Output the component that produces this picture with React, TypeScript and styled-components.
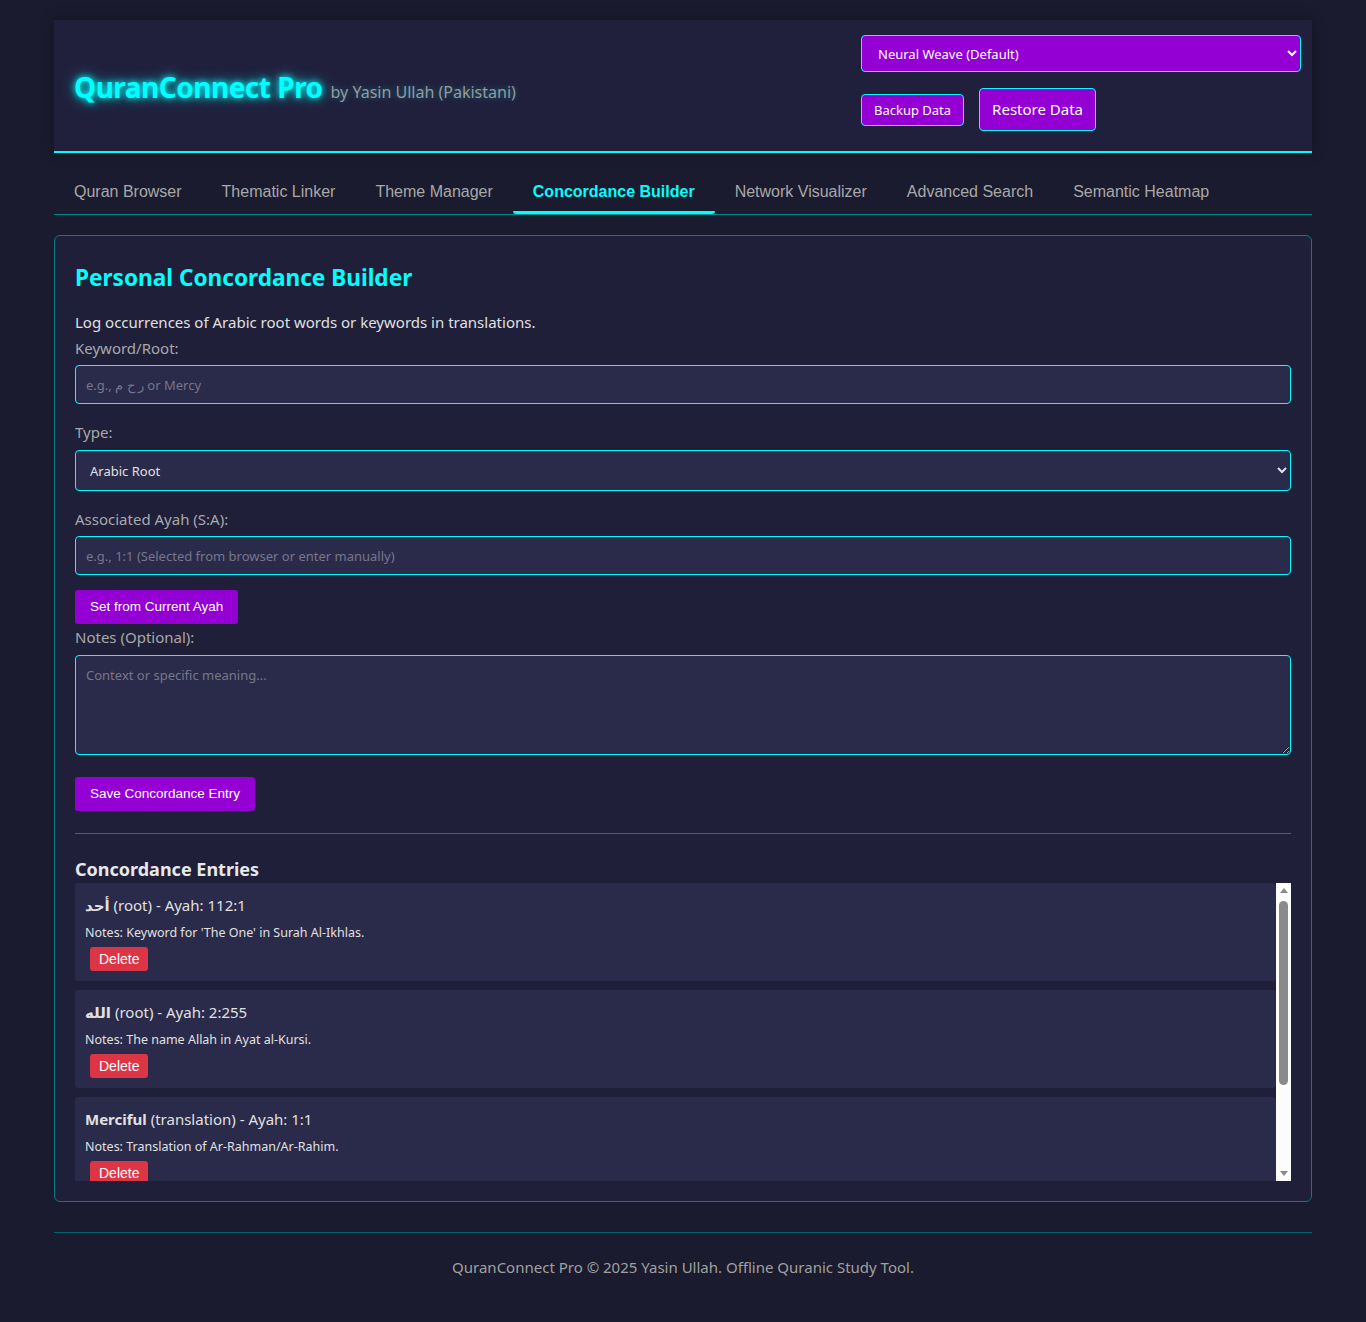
import React from "react";
import styled, { createGlobalStyle } from "styled-components";

const Global = createGlobalStyle`
  html, body { margin: 0; padding: 0; background: #1a1b2e; }
  body { font-family: "Noto Sans", "DejaVu Sans", sans-serif; color: #e0e0e0; }
  * { box-sizing: border-box; }
`;

const Page = styled.div`
  width: 1258px;
  margin: 0 auto;
  padding: 20px 0 0;
`;

const Header = styled.header`
  display: flex;
  justify-content: space-between;
  align-items: center;
  background: #20203c;
  padding: 15px 11px 20px 20px;
  border-bottom: 2px solid #00ffff;
  box-shadow: 0 0 12px rgba(0, 0, 0, 0.35);
`;

const Brand = styled.div`
  display: flex;
  align-items: baseline;
  gap: 8px;
  padding-top: 8px;
`;

const Title = styled.h1`
  margin: 0;
  font-size: 28px;
  font-weight: 700;
  color: #00ffff;
  letter-spacing: -0.5px;
  text-shadow: 0 0 6px #00ffff, 0 0 14px rgba(0, 255, 255, 0.7);
`;

const Sub = styled.span`
  font-size: 16px;
  color: #999;
  text-shadow: 0 0 6px rgba(0, 255, 255, 0.35);
`;

const Controls = styled.div`
  width: 440px;
  display: flex;
  flex-direction: column;
  gap: 16px;
`;

const ThemeSelect = styled.select`
  width: 100%;
  height: 37px;
  background: #9400d3;
  color: #fff;
  border: 1px solid #00ffff;
  border-radius: 4px;
  padding: 0 12px;
  font-family: "Noto Sans", sans-serif;
  font-size: 13px;
`;

const ButtonRow = styled.div`
  display: flex;
  align-items: center;
  gap: 15px;
`;

const HeadButton = styled.button<{ $big?: boolean }>`
  background: #9400d3;
  color: #fff;
  border: 1px solid #00ffff;
  border-radius: 4px;
  font-family: "Noto Sans", sans-serif;
  font-size: ${(p) => (p.$big ? "15px" : "13px")};
  padding: ${(p) => (p.$big ? "10px 12px" : "7px 12px")};
  line-height: ${(p) => (p.$big ? "21px" : "16px")};
  cursor: pointer;
`;

const Tabs = styled.nav`
  display: flex;
  margin-top: 18px;
  border-bottom: 1px solid #008b8b;
`;

const Tab = styled.button<{ $active?: boolean }>`
  background: none;
  border: none;
  border-bottom: 3px solid ${(p) => (p.$active ? "#00ffff" : "transparent")};
  border-radius: 0 0 3px 3px;
  padding: 12px 20px 10px;
  line-height: 18px;
  font-family: "Liberation Sans", Arial, sans-serif;
  font-size: 16px;
  font-weight: ${(p) => (p.$active ? 700 : 400)};
  color: ${(p) => (p.$active ? "#00ffff" : "#a8a8a8")};
  cursor: pointer;
`;

const Panel = styled.section`
  margin-top: 20px;
  background: #1f1f3a;
  border: 1px solid #008080;
  border-radius: 6px;
  padding: 20px;
`;

const PanelTitle = styled.h2`
  margin: 7px 0 19px;
  font-size: 22.6px;
  line-height: 29px;
  font-weight: 700;
  color: #00ffff;
`;

const Intro = styled.p`
  margin: 0 0 3px;
  font-size: 15px;
  line-height: 22px;
  color: #e0e0e0;
`;

const Label = styled.label<{ $mb?: number }>`
  display: block;
  font-size: 15px;
  line-height: 24px;
  color: #a8a8a8;
  margin-bottom: ${(p) => p.$mb ?? 5}px;
`;

const fieldCss = `
  display: block;
  width: 100%;
  background: #2a2a4a;
  border: 1px solid #00ffff;
  border-radius: 4px;
  color: #e0e0e0;
  font-family: "Noto Sans", sans-serif;
  font-size: 13px;
  padding: 0 10px;
  &::placeholder { color: #77778a; }
`;

const Input = styled.input<{ $mb?: number }>`
  ${fieldCss}
  height: 39px;
  margin-bottom: ${(p) => p.$mb ?? 16}px;
`;

const Select = styled.select`
  ${fieldCss}
  height: 41px;
  padding: 0 10px;
  margin-bottom: 16px;
`;

const TextArea = styled.textarea`
  ${fieldCss}
  height: 100px;
  padding: 10px;
  resize: vertical;
  margin-bottom: 22px;
`;

const ActionButton = styled.button<{ $mb?: number }>`
  display: block;
  background: #9400d3;
  color: #fff;
  border: none;
  border-radius: 3px;
  font-family: "Liberation Sans", Arial, sans-serif;
  font-size: 13.5px;
  line-height: 18px;
  padding: 8px 15px;
  margin-bottom: ${(p) => p.$mb ?? 0}px;
  cursor: pointer;
`;

const Divider = styled.hr`
  border: none;
  height: 1px;
  background: #008080;
  margin: 22px 0 23px;
`;

const ListTitle = styled.h3`
  margin: 0 0 2px;
  font-size: 18px;
  line-height: 24px;
  font-weight: 700;
  color: #e8e8e8;
`;

const ListWrap = styled.div`
  display: flex;
  height: 298px;
`;

const ListBody = styled.div`
  flex: 1;
  overflow-y: auto;
  scrollbar-width: none;
  &::-webkit-scrollbar { display: none; }
`;

const Rail = styled.div`
  width: 15px;
  flex: none;
  background: #fcfcfc;
  display: flex;
  flex-direction: column;
  align-items: center;
`;

const RailArrow = styled.div`
  width: 15px;
  height: 15px;
  display: flex;
  align-items: center;
  justify-content: center;
`;

const RailThumb = styled.div`
  width: 9px;
  height: 184px;
  margin-top: 3px;
  border-radius: 5px;
  background: #8a8a8a;
`;

const RailSpacer = styled.div`
  flex: 1;
`;

const Entry = styled.div`
  background: #2a2a4a;
  border-radius: 3px;
  padding: 10px;
  margin-bottom: 9px;
`;

const EntryHead = styled.div`
  font-size: 15px;
  line-height: 24px;
  color: #e0e0e0;
  margin-bottom: 6px;
  strong { font-weight: 700; }
`;

const EntryNotes = styled.div`
  font-size: 12.5px;
  line-height: 20px;
  color: #e0e0e0;
`;

const DeleteButton = styled.button`
  margin: 4px 0 0 5px;
  background: #dc3545;
  color: #fff;
  border: none;
  border-radius: 3px;
  font-family: "Liberation Sans", Arial, sans-serif;
  font-size: 14px;
  line-height: 18px;
  padding: 3px 9px;
  cursor: pointer;
`;

const Footer = styled.footer`
  margin-top: 30px;
  border-top: 1px solid #00666a;
  padding: 22px 0 44px;
  text-align: center;
  font-size: 15px;
  line-height: 24px;
  color: #a0a0a0;
`;

const tabs = [
  "Quran Browser",
  "Thematic Linker",
  "Theme Manager",
  "Concordance Builder",
  "Network Visualizer",
  "Advanced Search",
  "Semantic Heatmap",
];

const entries = [
  { word: "أحد", type: "root", ayah: "112:1", notes: "Keyword for 'The One' in Surah Al-Ikhlas." },
  { word: "الله", type: "root", ayah: "2:255", notes: "The name Allah in Ayat al-Kursi." },
  { word: "Merciful", type: "translation", ayah: "1:1", notes: "Translation of Ar-Rahman/Ar-Rahim." },
];

const Tri = ({ down }: { down?: boolean }) => (
  <svg width="8" height="5" viewBox="0 0 8 5">
    <polygon points={down ? "0,0 8,0 4,5" : "0,5 8,5 4,0"} fill="#8a8a8a" />
  </svg>
);

export default function App() {
  return (
    <>
      <Global />
      <Page>
        <Header>
          <Brand>
            <Title>QuranConnect Pro</Title>
            <Sub>by Yasin Ullah (Pakistani)</Sub>
          </Brand>
          <Controls>
            <ThemeSelect defaultValue="neural">
              <option value="neural">Neural Weave (Default)</option>
            </ThemeSelect>
            <ButtonRow>
              <HeadButton>Backup Data</HeadButton>
              <HeadButton $big>Restore Data</HeadButton>
            </ButtonRow>
          </Controls>
        </Header>

        <Tabs>
          {tabs.map((t) => (
            <Tab key={t} $active={t === "Concordance Builder"}>
              {t}
            </Tab>
          ))}
        </Tabs>

        <Panel>
          <PanelTitle>Personal Concordance Builder</PanelTitle>
          <Intro>Log occurrences of Arabic root words or keywords in translations.</Intro>
          <Label>Keyword/Root:</Label>
          <Input placeholder="e.g., ر ح م or Mercy" />
          <Label $mb={6}>Type:</Label>
          <Select defaultValue="root">
            <option value="root">Arabic Root</option>
          </Select>
          <Label>Associated Ayah (S:A):</Label>
          <Input $mb={15} placeholder="e.g., 1:1 (Selected from browser or enter manually)" />
          <ActionButton $mb={1}>Set from Current Ayah</ActionButton>
          <Label $mb={6}>Notes (Optional):</Label>
          <TextArea placeholder="Context or specific meaning..." />
          <ActionButton>Save Concordance Entry</ActionButton>
          <Divider />
          <ListTitle>Concordance Entries</ListTitle>
          <ListWrap>
            <ListBody>
              {entries.map((e) => (
                <Entry key={e.ayah}>
                  <EntryHead>
                    <strong>{e.word}</strong> ({e.type}) - Ayah: {e.ayah}
                  </EntryHead>
                  <EntryNotes>Notes: {e.notes}</EntryNotes>
                  <DeleteButton>Delete</DeleteButton>
                </Entry>
              ))}
            </ListBody>
            <Rail aria-hidden>
              <RailArrow>
                <Tri />
              </RailArrow>
              <RailThumb />
              <RailSpacer />
              <RailArrow>
                <Tri down />
              </RailArrow>
            </Rail>
          </ListWrap>
        </Panel>

        <Footer>QuranConnect Pro © 2025 Yasin Ullah. Offline Quranic Study Tool.</Footer>
      </Page>
    </>
  );
}
